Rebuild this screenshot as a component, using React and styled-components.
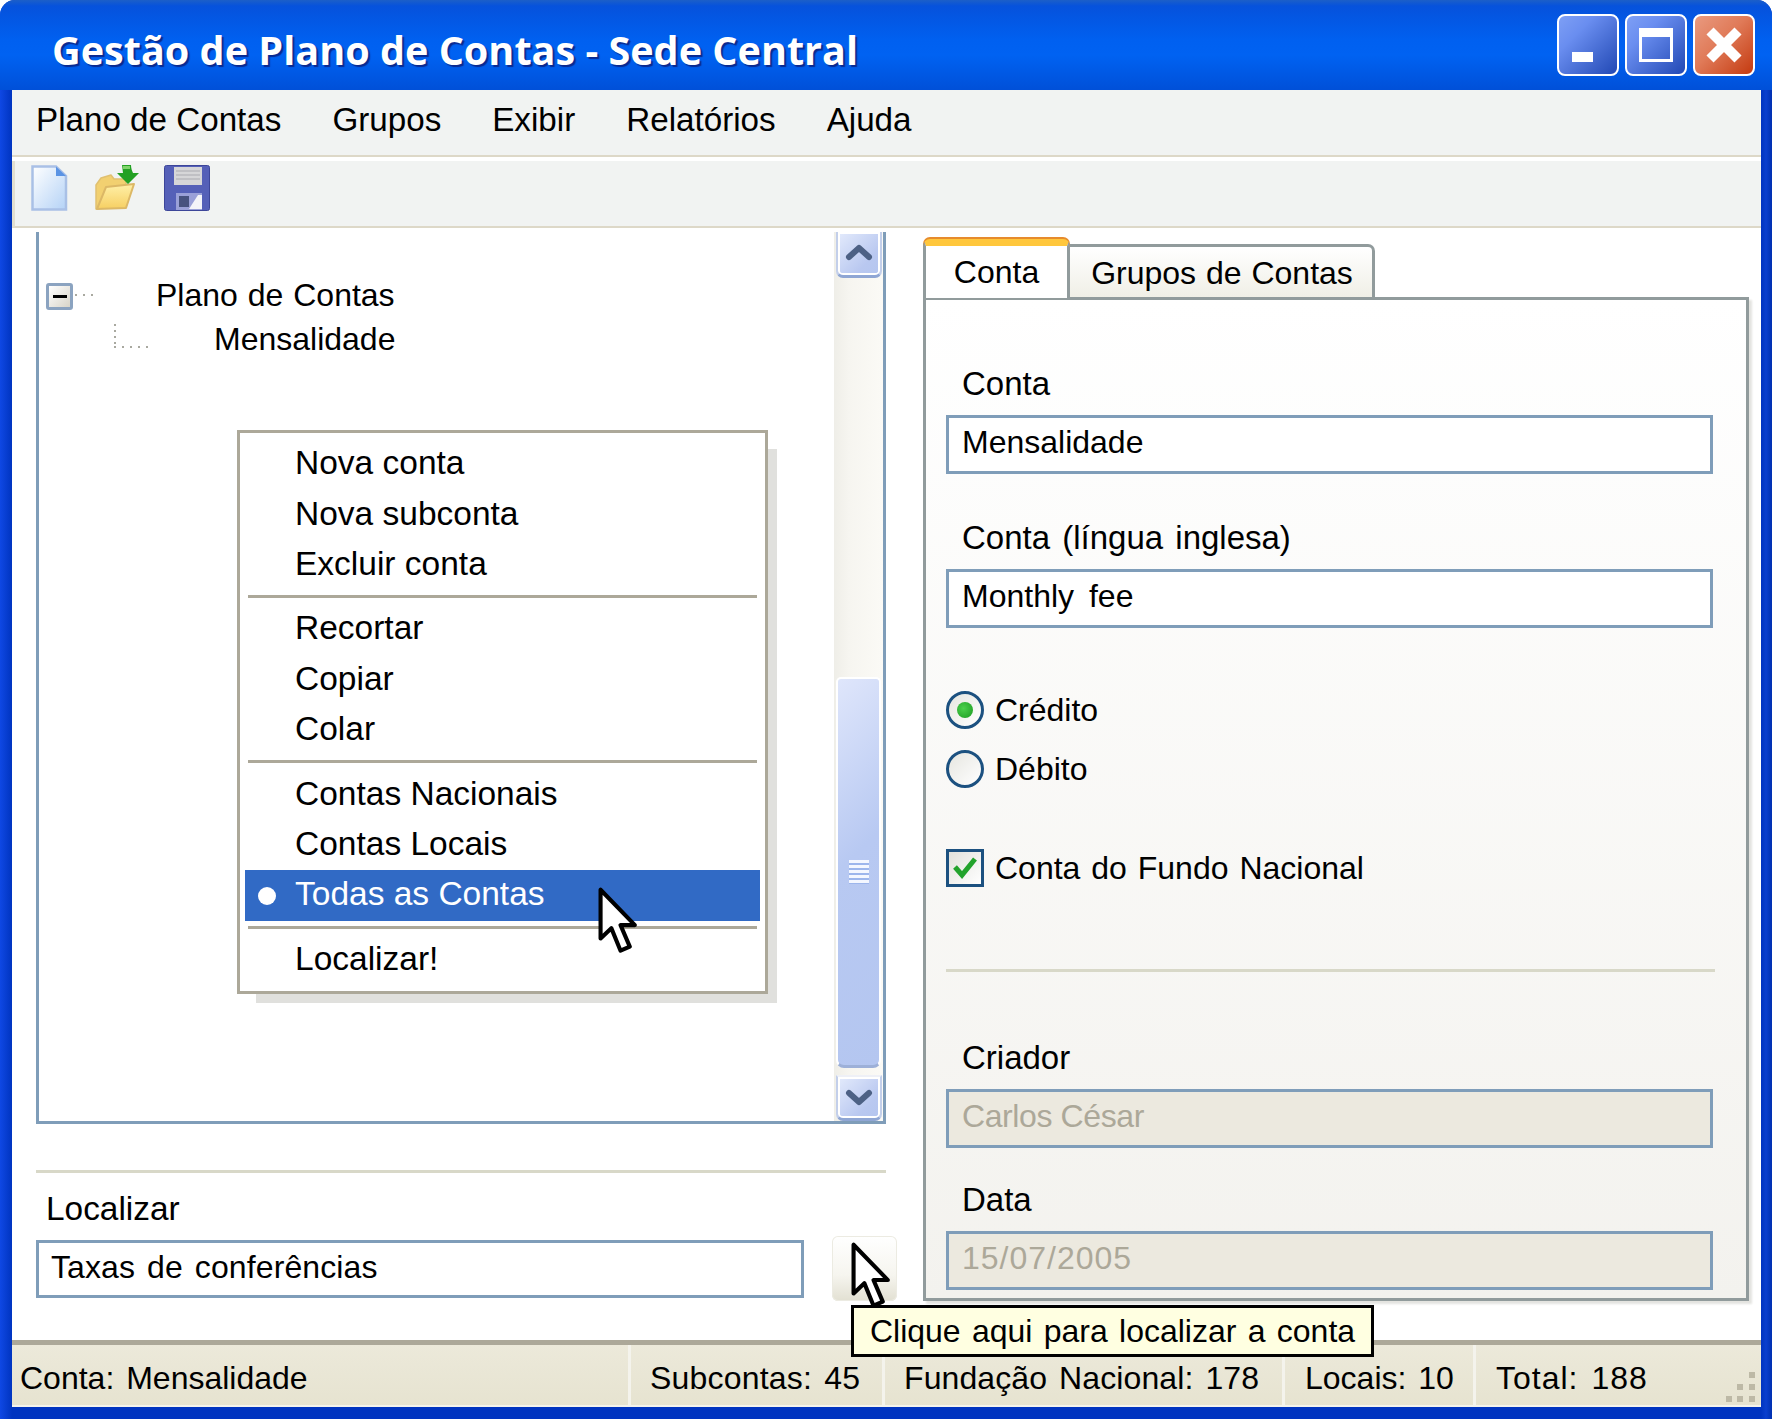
import React from 'react';
import styled, { createGlobalStyle } from 'styled-components';

const GlobalStyle = createGlobalStyle`
  html, body { margin: 0; padding: 0; background: #ffffff; }
  * { box-sizing: border-box; }
`;

const Window = styled.div`
  position: relative;
  width: 1772px;
  height: 1419px;
  display: flex;
  flex-direction: column;
  overflow: hidden;
  font-family: "Liberation Sans", Arial, sans-serif;
  font-size: 32px;
  color: #000;
  background: linear-gradient(90deg, #0f48e4 0, #0034c0 12px, #0034c0 1761px, #0a3fce 1766px, #0030b0 100%);
  border-radius: 15px 15px 0 0;
`;

const TitleBar = styled.div`
  height: 90px;
  flex: none;
  display: flex;
  align-items: center;
  justify-content: space-between;
  padding: 0 17px 0 52px;
  background: linear-gradient(180deg, #1c5fc8 0, #0652dc 6px, #0060f0 40px, #0062f2 55px, #0050d8 90px);
`;

const TitleText = styled.div`
  font-family: "Open Sans", sans-serif;
  font-weight: 700;
  font-size: 39.6px;
  color: #fff;
  text-shadow: 2px 2px 1px #0a2a90;
  margin-top: 10px;
`;

const WinButtons = styled.div`
  display: flex;
  gap: 6px;
  margin-top: -1px;
`;

const WinButton = styled.div`
  width: 62px;
  height: 62px;
  border: 2px solid #fff;
  border-radius: 8px;
  display: flex;
  align-items: center;
  justify-content: center;
  position: relative;
  background: ${p => p.$close
    ? 'linear-gradient(135deg, #e99a80 0, #e07a58 45%, #c43a10 100%)'
    : 'linear-gradient(135deg, #7e9ff5 0, #6a8ef0 30%, #2148b4 100%)'};
`;

const MinGlyph = styled.span`
  position: absolute;
  left: 13px;
  bottom: 12px;
  width: 21px;
  height: 10px;
  background: #fff;
`;

const MaxGlyph = styled.span`
  width: 34px;
  height: 34px;
  border: 3px solid #fff;
  border-top-width: 9px;
`;

const Body = styled.div`
  flex: 1;
  min-height: 0;
  margin: 0 11px 12px 12px;
  background: #fff;
  display: flex;
  flex-direction: column;
`;

const MenuBar = styled.div`
  height: 67px;
  flex: none;
  display: flex;
  align-items: center;
  gap: 51px;
  padding: 0 0 5px 24px;
  background: #f1f3f2;
  border-bottom: 2px solid #ddd8c8;
  font-size: 33.2px;
`;

const ToolBar = styled.div`
  height: 67px;
  flex: none;
  margin-top: 4px;
  display: flex;
  align-items: flex-start;
  padding: 4px 0 0 16px;
  gap: 24px;
  background: #f1f3f2;
  border-bottom: 2px solid #ddd8c8;
  border-left: 3px solid #e2dfd0;
`;

const Content = styled.div`
  flex: 1;
  min-height: 0;
  display: flex;
  padding: 4px 11px 0 24px;
`;

const LeftColumn = styled.div`
  width: 860px;
  flex: none;
  display: flex;
  flex-direction: column;
`;

const TreeBox = styled.div`
  position: relative;
  width: 850px;
  height: 892px;
  flex: none;
  display: flex;
  border-left: 3px solid #7f9db9;
  border-right: 3px solid #7f9db9;
  border-bottom: 3px solid #7f9db9;
`;

const Tree = styled.div`
  flex: 1;
  padding: 41px 0 0 8px;
`;

const TreeRow = styled.div`
  height: 44px;
  display: flex;
  align-items: center;
  word-spacing: 1px;
`;

const Expander = styled.div`
  width: 27px;
  height: 27px;
  margin: 2px 0 0 -1px;
  border: 3px solid #8ba3c0;
  border-radius: 3px;
  background: linear-gradient(135deg, #fff, #d8d4c8);
  display: flex;
  align-items: center;
  justify-content: center;
  flex: none;
  &::after {
    content: "";
    width: 14px;
    height: 3px;
    background: #000;
  }
`;

const DotsH = styled.span`
  width: 22px;
  height: 2px;
  margin-left: 2px;
  background: repeating-linear-gradient(90deg, #a9a9a0 0, #a9a9a0 2px, transparent 2px, transparent 8px);
  flex: none;
`;

const DotsL = styled.span`
  width: 40px;
  height: 24px;
  margin: -6px 0 0 67px;
  background:
    repeating-linear-gradient(180deg, #a9a9a0 0, #a9a9a0 2px, transparent 2px, transparent 6px) left top / 2px 100% no-repeat,
    repeating-linear-gradient(90deg, #a9a9a0 0, #a9a9a0 2px, transparent 2px, transparent 8px) left bottom / 100% 2px no-repeat;
  flex: none;
`;

const TreeLabel = styled.span`
  margin-left: ${p => p.$left}px;
`;

const ScrollBar = styled.div`
  width: 49px;
  flex: none;
  display: flex;
  flex-direction: column;
  align-items: center;
  background: linear-gradient(90deg, #efeee8 0, #f6f5f0 30%, #fbfaf6 100%);
`;

const ScrollButton = styled.div`
  width: 46px;
  height: 46px;
  flex: none;
  border: 2px solid #c3cfea;
  border-bottom: 3px solid #8fa6d4;
  border-top: ${p => (p.$up ? 'none' : '2px solid #eef0f6')};
  border-radius: 0 0 7px 7px;
  background: linear-gradient(135deg, #e4ebfc 0, #b9c8f0 70%, #b4c5ef 100%);
  box-shadow: inset 0 0 0 2px #fff;
  display: flex;
  align-items: center;
  justify-content: center;
  padding-bottom: ${p => (p.$up ? 4 : 0)}px;
`;

const ScrollSpace = styled.div`
  height: ${p => p.$h}px;
  flex: none;
`;

const ScrollThumb = styled.div`
  width: 45px;
  height: 391px;
  flex: none;
  border: 2px solid #fff;
  border-bottom: 3px solid #9db0d8;
  border-radius: 5px 5px 8px 8px;
  background: linear-gradient(135deg, #dfe6fb 0, #b8c9f2 45%, #b4c6f0 100%);
  display: flex;
  align-items: center;
  justify-content: center;
`;

const Grip = styled.div`
  width: 20px;
  height: 24px;
  background: repeating-linear-gradient(180deg, #f4f7ff 0, #f4f7ff 3px, #9db6ec 3px, #9db6ec 5px);
`;

const ContextMenu = styled.div`
  position: absolute;
  left: 198px;
  top: 198px;
  width: 531px;
  height: 564px;
  padding: 6px 5px 0 5px;
  background: #fff;
  border: 3px solid #aca899;
  box-shadow: 14px 14px 0 -5px #e0e0dd;
  font-size: 33.5px;
`;

const MenuItem = styled.div`
  position: relative;
  height: 50.4px;
  display: flex;
  align-items: center;
  padding: 0 0 2px 50px;
  background: ${p => (p.$active ? '#316ac5' : 'transparent')};
  color: ${p => (p.$active ? '#fff' : '#000')};
`;

const Bullet = styled.span`
  position: absolute;
  left: 13px;
  top: 17px;
  width: 18px;
  height: 18px;
  border-radius: 50%;
  background: #fff;
`;

const MenuSeparator = styled.div`
  height: 3px;
  margin: 5px 3px 6px;
  background: #aca899;
`;

const SearchDivider = styled.div`
  width: 850px;
  height: 3px;
  margin-top: 46px;
  background: #d8d8c8;
`;

const SearchLabel = styled.div`
  margin: 17px 0 0 10px;
  line-height: 37px;
  font-size: 33.4px;
`;

const SearchRow = styled.div`
  display: flex;
  align-items: center;
  margin-top: 9px;
  gap: 28px;
`;

const SearchInput = styled.div`
  width: 768px;
  height: 58px;
  flex: none;
  border: 3px solid #7f9db9;
  background: #fff;
  display: flex;
  align-items: center;
  padding: 0 0 2px 12px;
  word-spacing: 3px;
  letter-spacing: 0.1px;
`;

const SearchButton = styled.div`
  position: relative;
  width: 65px;
  height: 65px;
  flex: none;
  border-radius: 6px;
  background: linear-gradient(180deg, #fff 0, #f6f5ef 60%, #e2e0d2 100%);
  box-shadow: inset 0 0 0 1px #ecebe2;
`;

const Cursor = styled.svg`
  position: absolute;
  left: ${p => p.$x}px;
  top: ${p => p.$y}px;
  width: 41px;
  height: 70px;
`;

const RightColumn = styled.div`
  flex: 1;
  display: flex;
  flex-direction: column;
  padding: 5px 0 0 27px;
`;

const Tabs = styled.div`
  display: flex;
  align-items: flex-end;
  height: 60px;
  flex: none;
  position: relative;
  z-index: 1;
`;

const ActiveTab = styled.div`
  width: 147px;
  height: 59px;
  margin-bottom: -1px;
  border: 3px solid #919b9c;
  border-top: 7px solid #ffc73c;
  border-bottom: none;
  border-radius: 7px 7px 0 0;
  box-shadow: 0 -2px 0 #e68b2c;
  background: #fff;
  display: flex;
  align-items: center;
  justify-content: center;
  padding-top: 1px;
`;

const Tab = styled.div`
  width: 305px;
  height: 53px;
  border: 3px solid #919b9c;
  border-left: none;
  border-bottom: none;
  border-radius: 0 7px 0 0;
  background: linear-gradient(180deg, #fff, #f0efe6);
  display: flex;
  align-items: center;
  justify-content: center;
  word-spacing: 1px;
  padding: 2px 0 0 2px;
`;

const TabPanel = styled.div`
  width: 826px;
  height: 1004px;
  flex: none;
  border: 3px solid #919b9c;
  box-shadow: 3px 3px 2px #e4e4e0;
  background: linear-gradient(180deg, #fff 0, #f3f2ee 100%);
  padding: 0 33px 0 20px;
  display: flex;
  flex-direction: column;
`;

const FieldLabel = styled.div`
  margin: ${p => p.$top}px 0 13px 16px;
  line-height: 37px;
  font-size: 33px;
  word-spacing: 3px;
`;

const FieldInput = styled.div`
  width: 767px;
  height: 59px;
  flex: none;
  border: 3px solid #7f9db9;
  background: ${p => (p.$disabled ? '#ece9df' : '#fff')};
  color: ${p => (p.$disabled ? '#aca899' : '#000')};
  display: flex;
  align-items: center;
  padding: 0 0 4px 13px;
  word-spacing: ${p => p.$wordGap || 0}px;
  letter-spacing: ${p => p.$letterGap || 0}px;
`;

const OptionRow = styled.div`
  display: flex;
  align-items: center;
  height: 40px;
  gap: 11px;
  margin-top: ${p => p.$top}px;
  word-spacing: 2px;
`;

const Radio = styled.div`
  width: 38px;
  height: 38px;
  flex: none;
  border: 3px solid #1c5180;
  border-radius: 50%;
  background: linear-gradient(135deg, #e6e6e0, #ffffff);
  display: flex;
  align-items: center;
  justify-content: center;
`;

const RadioDot = styled.span`
  width: 16px;
  height: 16px;
  border-radius: 50%;
  background: radial-gradient(circle at 40% 40%, #4cd04c, #1a9a20);
`;

const CheckBox = styled.div`
  width: 38px;
  height: 38px;
  flex: none;
  border: 3px solid #1c5180;
  background: linear-gradient(135deg, #e2e2dc, #ffffff);
  display: flex;
  align-items: center;
  justify-content: center;
`;

const PanelDivider = styled.div`
  width: 769px;
  height: 3px;
  flex: none;
  margin-top: 81px;
  background: #d8d8c8;
`;

const Tooltip = styled.div`
  position: absolute;
  left: 851px;
  top: 1305px;
  width: 523px;
  height: 52px;
  border: 3px solid #000;
  background: #ffffe1;
  display: flex;
  align-items: center;
  justify-content: center;
  white-space: nowrap;
  word-spacing: 2.4px;
  z-index: 2;
`;

const StatusBar = styled.div`
  height: 67px;
  flex: none;
  position: relative;
  display: flex;
  align-items: center;
  border-top: 5px solid #aca899;
  background: linear-gradient(180deg, #ece9da 0, #e6e3d0 100%);
  box-shadow: inset 0 -2px 0 #f4f3ec;
`;

const StatusCell = styled.div`
  width: ${p => p.$w}px;
  flex: none;
  height: 100%;
  display: flex;
  align-items: center;
  padding: 5px 0 0 ${p => p.$pad}px;
  white-space: nowrap;
  word-spacing: 3px;
  letter-spacing: ${p => p.$letterGap || 0}px;
  border-right: ${p => (p.$last ? 'none' : '3px solid #f4f3ec')};
`;

const ResizeGrip = styled.svg`
  position: absolute;
  right: 2px;
  bottom: 3px;
  width: 34px;
  height: 34px;
`;

const NewFileIcon = () => (
  <svg width="38" height="46" viewBox="0 0 38 46">
    <defs>
      <linearGradient id="pageFill" x1="0" y1="0" x2="1" y2="1">
        <stop offset="0" stopColor="#ffffff" />
        <stop offset="1" stopColor="#b4d2f6" />
      </linearGradient>
    </defs>
    <path d="M1.5 1.5H25L35 11V44.5H1.5Z" fill="url(#pageFill)" stroke="#a9c0e6" strokeWidth="2.5" />
    <path d="M25 1.5V11H35Z" fill="#5a93e4" />
  </svg>
);

const OpenFolderIcon = () => (
  <svg width="47" height="46" viewBox="0 0 47 46">
    <defs>
      <linearGradient id="folderFill" x1="0" y1="0" x2="0" y2="1">
        <stop offset="0" stopColor="#fff0a8" />
        <stop offset="1" stopColor="#f6cf62" />
      </linearGradient>
    </defs>
    <path d="M3 20L8 13L18 10L21 14H33V24H14L6 44H3Z" fill="#f2d070" stroke="#e0c070" strokeWidth="1.5" strokeLinejoin="round" />
    <path d="M13 22L41 19L33 43L4 44Z" fill="url(#folderFill)" stroke="#dcb866" strokeWidth="2" strokeLinejoin="round" />
    <path d="M29 0H38C38 3 39 6 40 8H46L35 19L24 8H30Z" fill="#23a023" />
    <path d="M30 1H37V4H30Z" fill="#7fd46a" />
  </svg>
);

const SaveIcon = () => (
  <svg width="46" height="46" viewBox="0 0 46 46">
    <rect x="0.5" y="0.5" width="45" height="45" rx="2" fill="#5560b8" stroke="#3d4699" />
    <rect x="10" y="2" width="28" height="18" fill="#d6d6d8" />
    <path d="M12 6H36M12 10H36M12 14H36" stroke="#b9b9bd" strokeWidth="1.5" />
    <rect x="12" y="28" width="26" height="17" fill="#9aa0d8" />
    <rect x="15" y="31" width="10" height="11" fill="#47527f" />
    <path d="M25 44L34 30H38V44Z" fill="#f4f4f8" />
  </svg>
);

const ChevronIcon = ({ down }) => (
  <svg width="28" height="20" viewBox="0 0 28 20">
    <path
      d={down ? 'M4 5L14 14L24 5' : 'M4 15L14 6L24 15'}
      fill="none"
      stroke="#4d6185"
      strokeWidth="6"
      strokeLinecap="round"
      strokeLinejoin="round"
    />
  </svg>
);

const ArrowCursor = ({ x, y }) => (
  <Cursor $x={x} $y={y} viewBox="0 0 40 68">
    <path
      d="M2.5 2.5V50L13 40L22 62L31 58L22 37H36Z"
      fill="#fff"
      stroke="#000"
      strokeWidth="4"
      strokeLinejoin="round"
    />
  </Cursor>
);

const App = () => {
  return (
    <>
      <GlobalStyle />
      <Window>
        <TitleBar>
          <TitleText>Gestão de Plano de Contas - Sede Central</TitleText>
          <WinButtons>
            <WinButton><MinGlyph /></WinButton>
            <WinButton><MaxGlyph /></WinButton>
            <WinButton $close>
              <svg width="36" height="36" viewBox="0 0 36 36">
                <path d="M4 4L32 32M32 4L4 32" stroke="#fff" strokeWidth="10" />
              </svg>
            </WinButton>
          </WinButtons>
        </TitleBar>
        <Body>
          <MenuBar>
            <span>Plano de Contas</span>
            <span>Grupos</span>
            <span>Exibir</span>
            <span>Relatórios</span>
            <span>Ajuda</span>
          </MenuBar>
          <ToolBar>
            <NewFileIcon />
            <OpenFolderIcon />
            <SaveIcon />
          </ToolBar>
          <Content>
            <LeftColumn>
              <TreeBox>
                <Tree>
                  <TreeRow>
                    <Expander />
                    <DotsH />
                    <TreeLabel $left={59}>Plano de Contas</TreeLabel>
                  </TreeRow>
                  <TreeRow>
                    <DotsL />
                    <TreeLabel $left={60}>Mensalidade</TreeLabel>
                  </TreeRow>
                </Tree>
                <ScrollBar>
                  <ScrollButton $up><ChevronIcon /></ScrollButton>
                  <ScrollSpace $h={399} />
                  <ScrollThumb><Grip /></ScrollThumb>
                  <ScrollSpace $h={7} />
                  <ScrollButton><ChevronIcon down /></ScrollButton>
                </ScrollBar>
                <ContextMenu>
                  <MenuItem>Nova conta</MenuItem>
                  <MenuItem>Nova subconta</MenuItem>
                  <MenuItem>Excluir conta</MenuItem>
                  <MenuSeparator />
                  <MenuItem>Recortar</MenuItem>
                  <MenuItem>Copiar</MenuItem>
                  <MenuItem>Colar</MenuItem>
                  <MenuSeparator />
                  <MenuItem>Contas Nacionais</MenuItem>
                  <MenuItem>Contas Locais</MenuItem>
                  <MenuItem $active><Bullet />Todas as Contas</MenuItem>
                  <MenuSeparator />
                  <MenuItem>Localizar!</MenuItem>
                </ContextMenu>
                <ArrowCursor x={559} y={655} />
              </TreeBox>
              <SearchDivider />
              <SearchLabel>Localizar</SearchLabel>
              <SearchRow>
                <SearchInput>Taxas de conferências</SearchInput>
                <SearchButton>
                  <ArrowCursor x={19} y={6} />
                </SearchButton>
              </SearchRow>
            </LeftColumn>
            <RightColumn>
              <Tabs>
                <ActiveTab>Conta</ActiveTab>
                <Tab>Grupos de Contas</Tab>
              </Tabs>
              <TabPanel>
                <FieldLabel $top={65}>Conta</FieldLabel>
                <FieldInput>Mensalidade</FieldInput>
                <FieldLabel $top={45}>Conta (língua inglesa)</FieldLabel>
                <FieldInput $wordGap={6}>Monthly fee</FieldInput>
                <OptionRow $top={62}>
                  <Radio><RadioDot /></Radio>
                  <span>Crédito</span>
                </OptionRow>
                <OptionRow $top={19}>
                  <Radio />
                  <span>Débito</span>
                </OptionRow>
                <OptionRow $top={59}>
                  <CheckBox>
                    <svg width="26" height="26" viewBox="0 0 26 26">
                      <path d="M3 12L10 20L23 4" fill="none" stroke="#22a32c" strokeWidth="5" />
                    </svg>
                  </CheckBox>
                  <span>Conta do Fundo Nacional</span>
                </OptionRow>
                <PanelDivider />
                <FieldLabel $top={67}>Criador</FieldLabel>
                <FieldInput $disabled $letterGap={-0.4}>Carlos César</FieldInput>
                <FieldLabel $top={33}>Data</FieldLabel>
                <FieldInput $disabled $letterGap={1}>15/07/2005</FieldInput>
              </TabPanel>
            </RightColumn>
          </Content>
          <StatusBar>
            <StatusCell $w={619} $pad={8}>Conta: Mensalidade</StatusCell>
            <StatusCell $w={254} $pad={19} $letterGap={0.2}>Subcontas: 45</StatusCell>
            <StatusCell $w={400} $pad={19} $letterGap={0.1}>Fundação Nacional: 178</StatusCell>
            <StatusCell $w={191} $pad={20}>Locais: 10</StatusCell>
            <StatusCell $w={200} $pad={20} $last $letterGap={1}>Total: 188</StatusCell>
            <ResizeGrip viewBox="0 0 34 34">
              <path d="M24 2h6v6h-6zM12 14h6v6h-6zM24 14h6v6h-6zM1 26h6v6H1zM12 26h6v6h-6zM24 26h6v6h-6z" fill="#bdb9a6" />
            </ResizeGrip>
          </StatusBar>
        </Body>
        <Tooltip>Clique aqui para localizar a conta</Tooltip>
      </Window>
    </>
  );
};

export default App;
